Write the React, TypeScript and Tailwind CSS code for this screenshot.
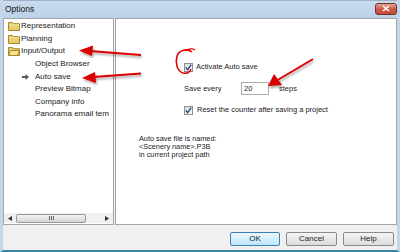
import React from "react"

const tree = [
  { label: "Representation", kind: "folder" },
  { label: "Planning", kind: "folder" },
  { label: "Input/Output", kind: "open" },
  { label: "Object Browser", kind: "child" },
  { label: "Auto save", kind: "current" },
  { label: "Preview Bitmap", kind: "child" },
  { label: "Company info", kind: "child" },
  { label: "Panorama email tem", kind: "child" },
]

function Folder({ open }: { open?: boolean }) {
  return (
    <svg width="12" height="10" viewBox="0 0 12 10" className="shrink-0">
      <path d="M0.5 1.5h4l1 1.2h6v6.8h-11z" fill="#e9cd6c" stroke="#a8862e" strokeWidth="1" />
      {open ? (
        <path d="M0.5 9.5l2-5h9l-2 5z" fill="#f6e39a" stroke="#a8862e" strokeWidth="1" />
      ) : (
        <path d="M1 4h10" stroke="#f8eab0" strokeWidth="1" />
      )}
    </svg>
  )
}

function Check() {
  return (
    <span className="flex h-[9px] w-[9px] shrink-0 items-center justify-center border border-[#8e8f8f] bg-gradient-to-br from-[#dcdcdc] to-[#fbfbfb]">
      <svg width="7" height="7" viewBox="0 0 7 7">
        <path d="M0.8 3.6l1.9 2 3.5-5" fill="none" stroke="#2b4a8c" strokeWidth="1.4" />
      </svg>
    </span>
  )
}

function Btn({ label, primary }: { label: string; primary?: boolean }) {
  return (
    <button
      className={
        primary
          ? "h-[14px] w-[50px] rounded-[2px] border border-[#3c7fb1] bg-gradient-to-b from-[#eaf6fd] to-[#bee6fd] text-[8px] leading-none text-[#222]"
          : "h-[14px] w-[51px] rounded-[2px] border border-[#8a8a8a] bg-gradient-to-b from-[#f4f4f4] to-[#dcdcdc] text-[8px] leading-none text-[#222]"
      }
    >
      {label}
    </button>
  )
}

export default function App() {
  return (
    <div className="relative flex h-[252px] w-[400px] flex-col overflow-hidden border-x-[3px] border-b-2 border-x-[#c3d6ec] border-b-[#3d86a8] bg-[#f0f0f0] font-['Liberation_Sans',Arial,sans-serif] text-[#1a1a1a]">
      {/* title bar */}
      <div className="flex h-[18px] shrink-0 items-center justify-between border-t border-[#9fb2c8] bg-gradient-to-b from-[#c9dbef] to-[#bcd2eb] pl-[2px] pr-0">
        <span className="text-[8.5px] text-[#111]">Options</span>
        <div className="mb-[2px] flex h-[12px] w-[22px] items-center justify-center rounded-[3px] border border-[#6b3232] bg-gradient-to-b from-[#e6a596] via-[#cc5a48] to-[#c74a36]">
          <svg width="8" height="7" viewBox="0 0 8 7">
            <path d="M1 1l6 5M7 1l-6 5" stroke="#fff" strokeWidth="1.6" />
          </svg>
        </div>
      </div>

      {/* panes */}
      <div className="flex h-[207px] shrink-0 gap-[1px]">
        <div className="flex w-[111px] flex-col border border-[#a5a5a5] bg-white">
          <div className="flex-1 pt-[1px]">
            {tree.map((t) => (
              <div key={t.label} className="flex h-[12.6px] items-center whitespace-nowrap text-[8px]">
                {t.kind === "folder" || t.kind === "open" ? (
                  <span className="flex items-center gap-[1px] pl-[4px]">
                    <Folder open={t.kind === "open"} />
                    {t.label}
                  </span>
                ) : (
                  <span className="flex items-center pl-[18px]">
                    <span className="flex w-[13px] items-center">
                      {t.kind === "current" && (
                        <svg width="7" height="6" viewBox="0 0 7 6">
                          <path d="M0 2h3.5V0L7 3 3.5 6V4H0z" fill="#595959" />
                        </svg>
                      )}
                    </span>
                    {t.label}
                  </span>
                )}
              </div>
            ))}
          </div>
          {/* horizontal scroll bar */}
          <div className="mb-[1px] flex h-[10px] items-center bg-[#f0f0f0] px-[4px]">
            <svg width="4" height="5" viewBox="0 0 4 5">
              <path d="M4 0v5L0 2.5z" fill="#333" />
            </svg>
            <div className="ml-[4px] flex h-[9px] w-[70px] items-center justify-center rounded-[2px] border border-[#9a9a9a] bg-gradient-to-b from-[#f4f4f4] to-[#d4d4d4]">
              <span className="flex gap-[1px]">
                <span className="h-[4px] w-px bg-[#666]" />
                <span className="h-[4px] w-px bg-[#666]" />
                <span className="h-[4px] w-px bg-[#666]" />
              </span>
            </div>
            <div className="flex-1" />
            <svg width="4" height="5" viewBox="0 0 4 5">
              <path d="M0 0v5l4-2.5z" fill="#333" />
            </svg>
          </div>
        </div>

        <div className="flex-1 border border-[#a5a5a5] bg-white text-[7.5px]">
          <div className="pl-[68px] pt-[43px]">
            <div className="flex h-[10px] items-center gap-[3px]">
              <Check />
              <span>Activate Auto save</span>
            </div>
            <div className="mt-[10px] flex h-[13px] items-center">
              <span className="w-[57px]">Save every</span>
              <div className="flex h-[13px] w-[28px] items-center border border-[#abadb3] pl-[2px]">20</div>
              <span className="ml-[10px]">steps</span>
            </div>
            <div className="mt-[10px] flex h-[10px] items-center gap-[4px]">
              <Check />
              <span>Reset the counter after saving a project</span>
            </div>
          </div>
          <div className="pl-[23px] pt-[20px] text-[7.3px] leading-[7.8px]">
            <div>Auto save file is named:</div>
            <div>&lt;Scenery name&gt;.P3B</div>
            <div>in current project path</div>
          </div>
        </div>
      </div>

      {/* buttons */}
      <div className="flex flex-1 items-start justify-end gap-[6px] pr-[3px] pt-[7px]">
        <Btn label="OK" primary />
        <Btn label="Cancel" />
        <Btn label="Help" />
      </div>

      {/* annotations */}
      <svg className="pointer-events-none absolute left-[-3px] top-0" width="400" height="252" viewBox="0 0 400 252">
        <defs>
          <filter id="sh" x="-20%" y="-20%" width="140%" height="160%">
            <feDropShadow dx="1" dy="2" stdDeviation="1" floodColor="#000" floodOpacity="0.35" />
          </filter>
        </defs>
        <g filter="url(#sh)" fill="#d90000" stroke="#d90000">
          <path d="M141 55L90 51" strokeWidth="2" fill="none" />
          <path d="M79 50.5L93 45.5L92 56z" stroke="none" />
          <path d="M141 73.5L93 77" strokeWidth="2" fill="none" />
          <path d="M82 78L95 72L96 83z" stroke="none" />
          <path d="M313 59L276 81" strokeWidth="2" fill="none" />
          <path d="M268 86L274 74L282 85z" stroke="none" />
        </g>
        <path
          d="M192 52C187 48 179 50 177 56C175 63 177 71 183 73C187 74 190 72 191 69"
          fill="none"
          stroke="#e00000"
          strokeWidth="1.6"
        />
        <path d="M185 51C188 49 192 48 195 50" fill="none" stroke="#e00000" strokeWidth="1.2" />
      </svg>
    </div>
  )
}
